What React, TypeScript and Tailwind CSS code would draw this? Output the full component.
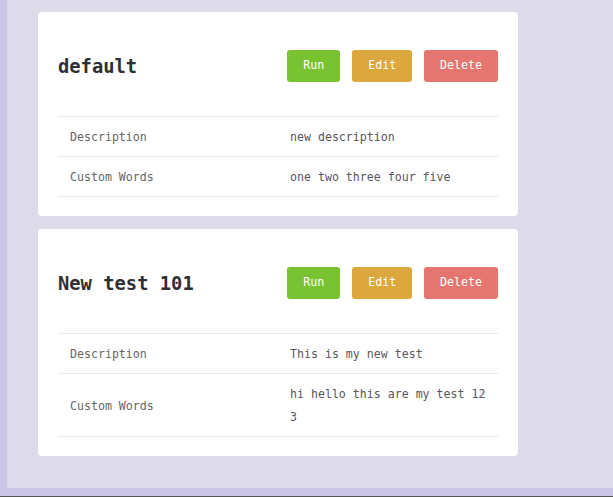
import React from 'react';

interface Profile {
  name: string;
  description: string;
  words: string;
}

const profiles: Profile[] = [
  { name: 'default', description: 'new description', words: 'one two three four five' },
  { name: 'New test 101', description: 'This is my new test', words: 'hi hello this are my test 12 3' },
];

function ProfileCard({ profile }: { profile: Profile }) {
  return (
    <div className="bg-white rounded-[4px] w-[480px] px-5 pt-5 pb-[19px]">
      <div className="h-[68px] flex items-center justify-between mb-4">
        <h2 className="text-[18.8px] font-bold text-[#2f2f36] pt-[3px]">{profile.name}</h2>
        <div className="flex gap-3">
          <button className="h-8 px-4 rounded-[3px] bg-[#79c232] text-white">Run</button>
          <button className="h-8 px-4 rounded-[3px] bg-[#dca73d] text-white">Edit</button>
          <button className="h-8 px-4 rounded-[3px] bg-[#e5756f] text-white">Delete</button>
        </div>
      </div>
      <table className="w-full table-fixed border-collapse">
        <tbody>
          <tr className="border-y border-[#e9e8f1]">
            <td className="px-3 pt-[9px] pb-[7px] leading-[23px] text-[#666]">Description</td>
            <td className="px-3 pt-[9px] pb-[7px] leading-[23px] text-[#5a5560]">{profile.description}</td>
          </tr>
          <tr className="border-b border-[#e9e8f1]">
            <td className="px-3 pt-[9px] pb-[7px] leading-[23px] text-[#666]">Custom Words</td>
            <td className="px-3 pt-[9px] pb-[7px] leading-[23px] text-[#5a5560]">{profile.words}</td>
          </tr>
        </tbody>
      </table>
    </div>
  );
}

export default function App() {
  return (
    <div
      className="h-[497px] w-[613px] bg-[#cbc5e6] pl-[7px] pb-[8px] border-b border-[#555] flex flex-col text-[11.6px]"
      style={{ fontFamily: '"DejaVu Sans Mono", monospace' }}
    >
      <div className="flex-1 bg-[#dddbea] pl-[31px] pt-3 flex flex-col gap-[13px]">
        {profiles.map((p) => (
          <ProfileCard key={p.name} profile={p} />
        ))}
      </div>
    </div>
  );
}
